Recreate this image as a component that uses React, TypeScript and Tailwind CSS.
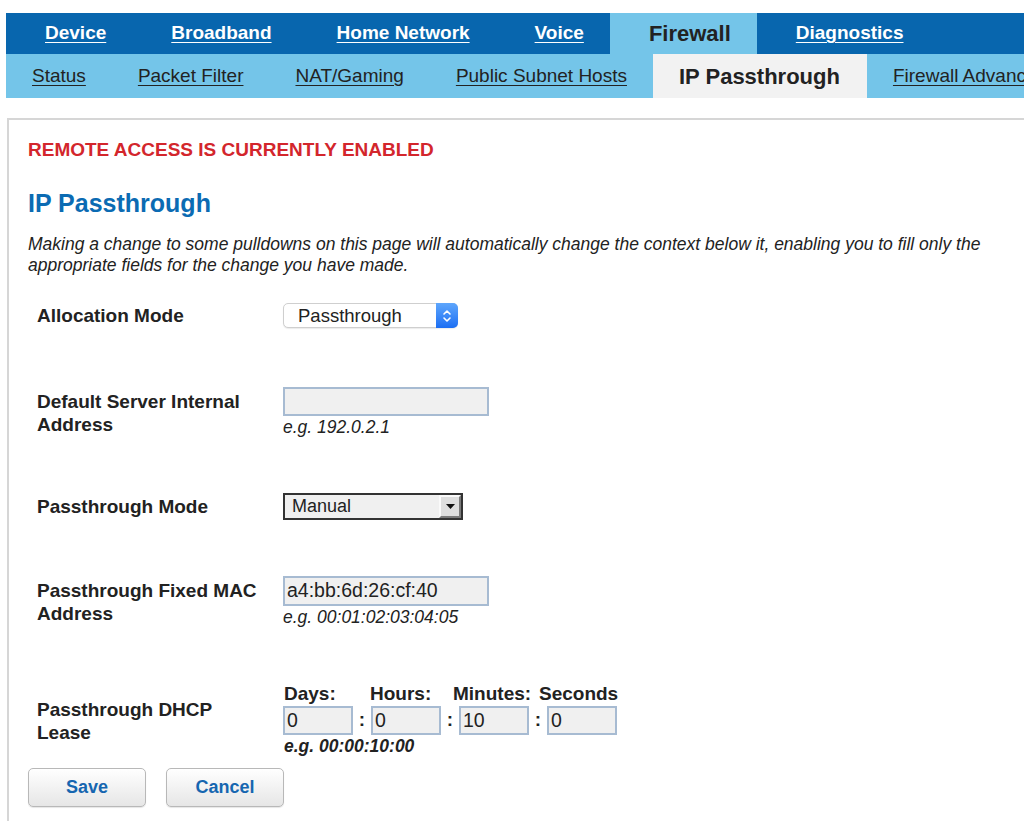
import React from "react";

const topTabs = [
  { label: "Device" },
  { label: "Broadband" },
  { label: "Home Network" },
  { label: "Voice" },
  { label: "Firewall", active: true },
  { label: "Diagnostics" },
];

const subTabs = [
  { label: "Status" },
  { label: "Packet Filter" },
  { label: "NAT/Gaming" },
  { label: "Public Subnet Hosts" },
  { label: "IP Passthrough", active: true },
  { label: "Firewall Advanced" },
];

function TextInput({ value, className }: { value: string; className: string }) {
  return (
    <div
      className={`flex items-center border-2 border-[#a7bbd2] bg-[#f0f0f0] pl-[2px] text-[19.5px] leading-none text-[#222] ${className}`}
    >
      {value}
    </div>
  );
}

function Label({ children }: { children: React.ReactNode }) {
  return (
    <div className="w-[246px] shrink-0 pr-[18px] text-[19px] font-bold leading-[23px] text-[#222]">
      {children}
    </div>
  );
}

function Hint({ children, bold }: { children: React.ReactNode; bold?: boolean }) {
  return (
    <div className={`text-[17.5px] italic leading-[22px] text-[#222] ${bold ? "font-bold" : ""}`}>
      {children}
    </div>
  );
}

export default function App() {
  return (
    <div className="min-h-[821px] overflow-hidden bg-white font-['Liberation_Sans',Arial,Helvetica,sans-serif] text-[#222]">
      <div className="pl-[6px] pt-[13px]">
        <nav className="flex h-[41px] whitespace-nowrap bg-[#0866ae]">
          {topTabs.map((t) =>
            t.active ? (
              <div
                key={t.label}
                className="flex items-center bg-[#74c5e9] pl-[39px] pr-[26px] text-[22px] font-bold text-[#222]"
              >
                {t.label}
              </div>
            ) : (
              <a
                key={t.label}
                className="flex items-center pl-[39px] pr-[26px] text-[19px] font-bold text-white underline underline-offset-[3px]"
              >
                {t.label}
              </a>
            )
          )}
        </nav>
        <nav className="flex h-[44px] whitespace-nowrap bg-[#74c5e9]">
          {subTabs.map((t) =>
            t.active ? (
              <div
                key={t.label}
                className="flex items-center bg-[#f2f2f2] pl-[26px] pr-[27px] text-[22px] font-bold text-[#222]"
              >
                {t.label}
              </div>
            ) : (
              <a
                key={t.label}
                className="flex items-center px-[26px] text-[19px] text-[#222] underline underline-offset-[3px]"
              >
                {t.label}
              </a>
            )
          )}
        </nav>
      </div>

      <div className="ml-[7px] mt-[20px] border-l-2 border-t-2 border-[#d6d6d6] pb-[20px] pl-[19px] pt-[19px]">
        <div className="text-[19px] font-bold leading-[22px] text-[#d3262c]">
          REMOTE ACCESS IS CURRENTLY ENABLED
        </div>
        <h1 className="mt-[27px] text-[25px] font-bold leading-[30px] text-[#0b6bb3]">IP Passthrough</h1>
        <p className="mt-[16px] w-[990px] text-[17.5px] italic leading-[21px] text-[#222]">
          Making a change to some pulldowns on this page will automatically change the context below it, enabling you to
          fill only the appropriate fields for the change you have made.
        </p>

        {/* Allocation Mode */}
        <div className="mt-[27px] flex items-center pl-[9px]">
          <Label>Allocation Mode</Label>
          <div className="flex h-[25px] w-[175px] items-stretch rounded-[5px] border border-[#cfcfcf] bg-white shadow-[0_1px_1px_rgba(0,0,0,0.08)]">
            <div className="flex flex-1 items-center pl-[14px] text-[18.5px] text-[#222]">Passthrough</div>
            <div className="-my-px -mr-px flex w-[22px] items-center justify-center rounded-r-[5px] bg-gradient-to-b from-[#5ea6fc] to-[#1b6ef3]">
              <svg width="10" height="16" viewBox="0 0 10 16" fill="none">
                <path d="M2 6 L5 3 L8 6" stroke="white" strokeWidth="1.6" strokeLinecap="round" strokeLinejoin="round" />
                <path d="M2 10 L5 13 L8 10" stroke="white" strokeWidth="1.6" strokeLinecap="round" strokeLinejoin="round" />
              </svg>
            </div>
          </div>
        </div>

        {/* Default Server Internal Address */}
        <div className="mt-[59px] flex items-center pl-[9px]">
          <Label>Default Server Internal Address</Label>
          <div>
            <TextInput value="" className="h-[29px] w-[206px]" />
            <Hint>e.g. 192.0.2.1</Hint>
          </div>
        </div>

        {/* Passthrough Mode */}
        <div className="mt-[55px] flex items-center pl-[9px]">
          <Label>Passthrough Mode</Label>
          <div className="flex h-[27px] w-[180px] items-stretch border-2 border-[#333] bg-[#f0f0f0]">
            <div className="flex flex-1 items-center pl-[7px] text-[18px] text-[#222]">Manual</div>
            <div className="flex w-[22px] items-center justify-center border-2 border-b-[#7a7a7a] border-l-[#fafafa] border-r-[#7a7a7a] border-t-[#fafafa] bg-[#dedede]">
              <svg width="9" height="5" viewBox="0 0 9 5">
                <path d="M0 0 H9 L4.5 5 Z" fill="#111" />
              </svg>
            </div>
          </div>
        </div>

        {/* Passthrough Fixed MAC Address */}
        <div className="mt-[56px] flex items-center pl-[9px]">
          <Label>Passthrough Fixed MAC Address</Label>
          <div>
            <TextInput value="a4:bb:6d:26:cf:40" className="h-[30px] w-[206px]" />
            <Hint>e.g. 00:01:02:03:04:05</Hint>
          </div>
        </div>

        {/* Passthrough DHCP Lease */}
        <div className="mt-[56px] flex items-center pl-[9px]">
          <Label>Passthrough DHCP Lease</Label>
          <div>
            <div className="flex pl-[1px] text-[19px] font-bold leading-[20px] text-[#222]">
              <span className="w-[86px]">Days:</span>
              <span className="w-[83px]">Hours:</span>
              <span className="w-[86px]">Minutes:</span>
              <span>Seconds</span>
            </div>
            <div className="mt-[2px] flex items-center">
              <TextInput value="0" className="h-[29px] w-[70px]" />
              <span className="w-[18px] text-center text-[19px] font-bold">:</span>
              <TextInput value="0" className="h-[29px] w-[70px]" />
              <span className="w-[18px] text-center text-[19px] font-bold">:</span>
              <TextInput value="10" className="h-[29px] w-[70px]" />
              <span className="w-[18px] text-center text-[19px] font-bold">:</span>
              <TextInput value="0" className="h-[29px] w-[70px]" />
            </div>
            <div className="pl-[1px]">
              <Hint bold>e.g. 00:00:10:00</Hint>
            </div>
          </div>
        </div>

        <div className="mt-[11px] flex gap-[20px]">
          <button className="h-[39px] w-[118px] rounded-[5px] border border-[#b8b8b8] bg-gradient-to-b from-white to-[#e6e6e6] text-[18px] font-bold text-[#1666b0] shadow-[0_1px_1px_rgba(0,0,0,0.1)]">
            Save
          </button>
          <button className="h-[39px] w-[118px] rounded-[5px] border border-[#b8b8b8] bg-gradient-to-b from-white to-[#e6e6e6] text-[18px] font-bold text-[#1666b0] shadow-[0_1px_1px_rgba(0,0,0,0.1)]">
            Cancel
          </button>
        </div>
      </div>
    </div>
  );
}
